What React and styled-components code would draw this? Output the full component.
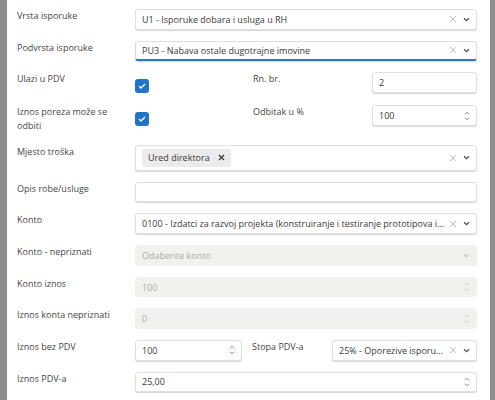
import React from "react";
import styled, { createGlobalStyle, css } from "styled-components";

const Global = createGlobalStyle`
  html, body { margin: 0; padding: 0; height: 100%; overflow: hidden; }
  body { background: #8e8e8e; font-family: "Open Sans", "Noto Sans", sans-serif; }
  * { box-sizing: border-box; }
`;

const Backdrop = styled.div`
  width: 495px;
  height: 400px;
  background: #8e8e8e;
  display: flex;
  overflow: hidden;
`;

const Modal = styled.div`
  margin-left: 7px;
  width: 483px;
  height: 400px;
  background: #fff;
  padding: 9px 13px 0 10px;
`;

const Form = styled.div`
  display: flex;
  flex-direction: column;
  gap: 11.17px;
`;

const Row = styled.div`
  display: grid;
  grid-template-columns: ${(p) => p.$cols || "118px 1fr"};
  align-items: start;
`;

const Label = styled.div`
  font-size: 9px;
  line-height: 14px;
  color: #464646;
  padding-left: ${(p) => p.$pl || 0}px;
  padding-right: 6px;
`;

const Box = styled.div`
  height: ${(p) => p.$h || 20.5}px;
  border: 1px solid #dfdfdf;
  border-radius: 3px;
  display: flex;
  align-items: center;
  padding-left: 6px;
  padding-right: 6px;
  font-size: 9px;
  color: #3a3a3a;
  background: #fff;
  box-shadow: 0 1px 1px rgba(0, 0, 0, 0.16);
  min-width: 0;
  ${(p) =>
    p.$focused &&
    css`
      border-left-color: #c3dcf3;
      border-bottom: 2px solid #2a78c6;
    `}
  ${(p) =>
    p.$disabled &&
    css`
      background: #f1f1f0;
      border-color: #f1f1f0;
      box-shadow: none;
      color: #ababab;
    `}
`;

const Value = styled.span`
  flex: 1;
  min-width: 0;
  white-space: nowrap;
  overflow: hidden;
  text-overflow: ellipsis;
`;

const Icons = styled.div`
  display: flex;
  align-items: center;
  gap: 6px;
  margin-left: 4px;
`;

const Chip = styled.span`
  display: inline-flex;
  align-items: center;
  gap: 8px;
  height: 18px;
  padding: 0 6px;
  background: #ebebeb;
  border-radius: 3px;
  color: #3a3a3a;
  font-size: 9px;
`;

const Check = styled.span`
  width: 14px;
  height: 14px;
  border-radius: 3px;
  background: #1f74c8;
  display: inline-flex;
  align-items: center;
  justify-content: center;
`;

const Spin = styled.div`
  display: flex;
  flex-direction: column;
  align-items: center;
  gap: 2px;
`;

const ClearIcon = () => (
  <svg width="8" height="8" viewBox="0 0 8 8">
    <path d="M1 1L7 7M7 1L1 7" stroke="#b8b8b8" strokeWidth="0.9" fill="none" />
  </svg>
);

const Chevron = ({ color = "#505050" }) => (
  <svg width="7" height="5" viewBox="0 0 7 5">
    <path d="M1 1.2L3.5 3.6L6 1.2" stroke={color} strokeWidth="1.3" fill="none" />
  </svg>
);

const Caret = ({ up, color = "#7a7a7a" }) => (
  <svg width="6" height="4" viewBox="0 0 6 4">
    <path
      d={up ? "M1 3.2L3 1.2L5 3.2" : "M1 0.8L3 2.8L5 0.8"}
      stroke={color}
      strokeWidth="0.9"
      fill="none"
    />
  </svg>
);

const Select = ({ value, children, focused, disabled, placeholder, h }) => (
  <Box $focused={focused} $disabled={disabled} $h={h}>
    <Value>{children || value || placeholder}</Value>
    <Icons>
      {!disabled && <ClearIcon />}
      <Chevron color={disabled ? "#c6c6c6" : "#505050"} />
    </Icons>
  </Box>
);

const NumberInput = ({ value, disabled, spin = true }) => (
  <Box $disabled={disabled}>
    <Value>{value}</Value>
    {spin && (
      <Spin>
        <Caret up color={disabled ? "#c8c8c8" : "#7a7a7a"} />
        <Caret color={disabled ? "#c8c8c8" : "#7a7a7a"} />
      </Spin>
    )}
  </Box>
);

const CheckBox = () => (
  <Check>
    <svg width="8" height="6" viewBox="0 0 8 6">
      <path d="M1 3L3 5L7 1" stroke="#fff" strokeWidth="1.3" fill="none" />
    </svg>
  </Check>
);

export default function App() {
  return (
    <>
      <Global />
      <Backdrop>
        <Modal>
          <Form>
            <Row>
              <Label>Vrsta isporuke</Label>
              <Select value="U1 - Isporuke dobara i usluga u RH" />
            </Row>
            <Row>
              <Label>Podvrsta isporuke</Label>
              <Select focused value="PU3 - Nabava ostale dugotrajne imovine" />
            </Row>
            <Row $cols="118px 118px 119px 1fr">
              <Label>Ulazi u PDV</Label>
              <div>
                <CheckBox />
              </div>
              <Label>Rn. br.</Label>
              <NumberInput value="2" spin={false} />
            </Row>
            <Row $cols="118px 118px 119px 1fr">
              <Label>Iznos poreza može se odbiti</Label>
              <div>
                <CheckBox />
              </div>
              <Label>Odbitak u %</Label>
              <NumberInput value="100" />
            </Row>
            <Row>
              <Label>Mjesto troška</Label>
              <Select h={26}>
                <Chip>
                  Ured direktora
                  <svg width="7" height="7" viewBox="0 0 7 7">
                    <path d="M1 1L6 6M6 1L1 6" stroke="#333" strokeWidth="1.1" fill="none" />
                  </svg>
                </Chip>
              </Select>
            </Row>
            <Row>
              <Label>Opis robe/usluge</Label>
              <Box />
            </Row>
            <Row>
              <Label>Konto</Label>
              <Select value="0100 - Izdatci za razvoj projekta (konstruiranje i testiranje prototipova i modela)" />
            </Row>
            <Row>
              <Label>Konto - nepriznati</Label>
              <Select disabled placeholder="Odaberite konto" />
            </Row>
            <Row>
              <Label>Konto iznos</Label>
              <NumberInput disabled value="100" />
            </Row>
            <Row>
              <Label>Iznos konta nepriznati</Label>
              <NumberInput disabled value="0" />
            </Row>
            <Row $cols="118px 107px 90px 1fr">
              <Label>Iznos bez PDV</Label>
              <NumberInput value="100" />
              <Label $pl={10}>Stopa PDV-a</Label>
              <Select value="25% - Oporezive isporuke (PDV 25%)" />
            </Row>
            <Row>
              <Label>Iznos PDV-a</Label>
              <NumberInput value="25,00" />
            </Row>
          </Form>
        </Modal>
      </Backdrop>
    </>
  );
}
